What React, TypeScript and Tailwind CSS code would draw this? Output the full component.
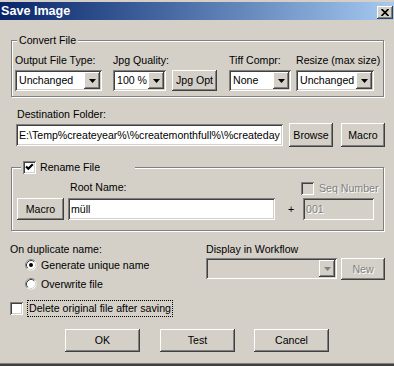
const RAISED =
  "shadow-[inset_-1px_-1px_0_#404040,inset_1px_1px_0_#ffffff,inset_-2px_-2px_0_#808080,inset_2px_2px_0_#d4d0c8]"
const SUNKEN =
  "shadow-[inset_1px_1px_0_#808080,inset_-1px_-1px_0_#ffffff,inset_2px_2px_0_#404040,inset_-2px_-2px_0_#d4d0c8]"
const ETCHED = "border border-[#808080] shadow-[inset_1px_1px_0_#ffffff,1px_1px_0_#ffffff]"
const GRAYTEXT = "text-[#808080] [text-shadow:1px_1px_0_#ffffff]"

function Arrow({ disabled }: { disabled?: boolean }) {
  return (
    <svg width="7" height="4" viewBox="0 0 7 4">
      <path d="M0 0H7L3.5 4Z" fill={disabled ? "#808080" : "#000000"} />
    </svg>
  )
}

function Combo({ w, value, disabled }: { w: string; value?: string; disabled?: boolean }) {
  return (
    <div
      className={`${SUNKEN} ${w} h-[21px] p-[2px] flex items-center ${disabled ? "bg-[#d4d0c8]" : "bg-white"}`}
    >
      <span className="flex-1 pl-[2px] whitespace-nowrap overflow-hidden">{value}</span>
      <div className={`${RAISED} w-[16px] h-full bg-[#d4d0c8] flex items-center justify-center`}>
        <Arrow disabled={disabled} />
      </div>
    </div>
  )
}

function Btn({ w, h, children, disabled }: { w: string; h: string; children: React.ReactNode; disabled?: boolean }) {
  return (
    <button
      className={`${RAISED} ${w} ${h} bg-[#d4d0c8] flex items-center justify-center shrink-0 whitespace-nowrap ${disabled ? GRAYTEXT : ""}`}
    >
      {children}
    </button>
  )
}

function Check({ checked, disabled }: { checked?: boolean; disabled?: boolean }) {
  return (
    <div className={`${SUNKEN} w-[13px] h-[13px] shrink-0 ${disabled ? "bg-[#d4d0c8]" : "bg-white"}`}>
      {checked && (
        <svg width="13" height="13" viewBox="0 0 13 13">
          <path d="M3 5.5L5.3 7.8L9.8 3.3" stroke="#000000" strokeWidth="2.2" fill="none" />
        </svg>
      )}
    </div>
  )
}

function Radio({ checked }: { checked?: boolean }) {
  return (
    <svg width="12" height="12" viewBox="0 0 12 12" className="shrink-0">
      <circle cx="6" cy="6" r="5.5" fill="#ffffff" />
      <path d="M2.11 9.89A5.5 5.5 0 0 1 9.89 2.11" stroke="#808080" fill="none" />
      <path d="M2.82 9.18A4.5 4.5 0 0 1 9.18 2.82" stroke="#404040" fill="none" />
      <path d="M9.18 2.82A4.5 4.5 0 0 1 2.82 9.18" stroke="#d4d0c8" fill="none" />
      {checked && <circle cx="6" cy="6" r="2" fill="#000000" />}
    </svg>
  )
}

export default function App() {
  return (
    <div className="w-[394px] h-[366px] overflow-hidden bg-[#d4d0c8] font-['Liberation_Sans',Arial,sans-serif] text-[10.6px] leading-[13px] text-black shadow-[inset_0_-2px_0_#404040,inset_0_-3px_0_#808080]">
      {/* Title bar */}
      <div className="mt-[2px] h-[18px] bg-linear-to-r from-[#0a246a] to-[#a6caf0] flex items-start pl-[1px]">
        <span className="text-white font-bold text-[12.6px] leading-[18px]">Save Image</span>
        <div className={`${RAISED} ml-auto mr-[1px] mt-[4px] w-[16px] h-[13px] bg-[#d4d0c8] flex items-center justify-center`}>
          <svg width="8" height="7" viewBox="0 0 8 7">
            <path d="M0.5 0L7.5 7M7.5 0L0.5 7" stroke="#000000" strokeWidth="1.7" />
          </svg>
        </div>
      </div>

      {/* Convert File */}
      <fieldset className={`${ETCHED} ml-[11px] mt-[14px] w-[373px] px-0 pb-[5px]`}>
        <legend className="ml-[5px] px-[2px] bg-[#d4d0c8] leading-[13px]">Convert File</legend>
        <div className="flex items-end pl-[3px] pt-[7px] whitespace-nowrap">
          <div className="flex flex-col w-[87px]">
            <span>Output File Type:</span>
            <div className="mt-[3px]">
              <Combo w="w-[87px]" value="Unchanged" />
            </div>
          </div>
          <div className="flex flex-col w-[53px] ml-[11px]">
            <span>Jpg Quality:</span>
            <div className="mt-[3px]">
              <Combo w="w-[53px]" value="100 %" />
            </div>
          </div>
          <div className="ml-[6px]">
            <Btn w="w-[45px]" h="h-[21px]">Jpg Opt</Btn>
          </div>
          <div className="flex flex-col w-[62px] ml-[12px]">
            <span>Tiff Compr:</span>
            <div className="mt-[3px]">
              <Combo w="w-[62px]" value="None" />
            </div>
          </div>
          <div className="flex flex-col w-[78px] ml-[5px]">
            <span>Resize (max size)</span>
            <div className="mt-[3px]">
              <Combo w="w-[78px]" value="Unchanged" />
            </div>
          </div>
        </div>
      </fieldset>

      {/* Destination */}
      <div className="mt-[11px] ml-[17px]">Destination Folder:</div>
      <div className="mt-[2px] flex items-start">
        <div className={`${SUNKEN} ml-[16px] mt-[1px] w-[267px] h-[22px] bg-white px-[3px] flex items-center overflow-hidden whitespace-nowrap`}>
          E:\Temp%createyear%\%createmonthfull%\%createday
        </div>
        <div className="ml-[6px]">
          <Btn w="w-[44px]" h="h-[24px]">Browse</Btn>
        </div>
        <div className="ml-[8px]">
          <Btn w="w-[44px]" h="h-[24px]">Macro</Btn>
        </div>
      </div>

      {/* Rename File */}
      <fieldset className={`${ETCHED} ml-[11px] mt-[14px] w-[373px] px-0 pb-[10px]`}>
        <legend className="ml-[9px] px-[2px] w-[114px] bg-[#d4d0c8] leading-[13px] flex items-center">
          <Check checked />
          <span className="ml-[4px]">Rename File</span>
        </legend>
        <div className="pt-[7px] pl-[5px] pr-[9px]">
          <div className="h-[13px] flex items-center">
            <span className="ml-[53px]">Root Name:</span>
            <div className="ml-auto w-[73px] flex items-center mt-[1px]">
              <Check disabled />
              <span className={`ml-[5px] whitespace-nowrap ${GRAYTEXT}`}>Seq Number</span>
            </div>
          </div>
          <div className="mt-[4px] h-[22px] flex items-start">
            <Btn w="w-[47px]" h="h-[22px]">Macro</Btn>
            <div className={`${SUNKEN} ml-[4px] w-[207px] h-[22px] bg-white px-[3px] flex items-center`}>
              müll
            </div>
            <span className="ml-[13px] self-center">+</span>
            <div className="ml-auto w-[73px]">
              <div className={`${SUNKEN} ml-[2px] w-[71px] h-[22px] bg-[#d4d0c8] px-[3px] flex items-center ${GRAYTEXT}`}>
                001
              </div>
            </div>
          </div>
        </div>
      </fieldset>

      {/* Duplicate / Workflow */}
      <div className="mt-[12px] flex items-start">
        <div className="ml-[10px] w-[196px] flex flex-col">
          <span className="h-[13px]">On duplicate name:</span>
          <div className="mt-[1px] h-[16px] pl-[15px] flex items-center">
            <Radio checked />
            <span className="ml-[4px]">Generate unique name</span>
          </div>
          <div className="mt-[3px] h-[16px] pl-[15px] flex items-center">
            <Radio />
            <span className="ml-[4px]">Overwrite file</span>
          </div>
          <div className="mt-[8px] h-[17px] flex items-center">
            <Check />
            <span className="ml-[4px] h-[17px] px-[1px] border border-dotted border-black flex items-center whitespace-nowrap">
              Delete original file after saving
            </span>
          </div>
        </div>
        <div className="flex flex-col">
          <span className="h-[13px]">Display in Workflow</span>
          <div className="mt-[2px] flex items-start">
            <Combo w="w-[131px]" disabled />
            <div className="ml-[4px]">
              <Btn w="w-[44px]" h="h-[22px]" disabled>
                New
              </Btn>
            </div>
          </div>
        </div>
      </div>

      {/* Buttons */}
      <div className="mt-[12px] flex">
        <div className="ml-[65px]">
          <Btn w="w-[75px]" h="h-[23px]">OK</Btn>
        </div>
        <div className="ml-[20px]">
          <Btn w="w-[75px]" h="h-[23px]">Test</Btn>
        </div>
        <div className="ml-[19px]">
          <Btn w="w-[75px]" h="h-[23px]">Cancel</Btn>
        </div>
      </div>
    </div>
  )
}
